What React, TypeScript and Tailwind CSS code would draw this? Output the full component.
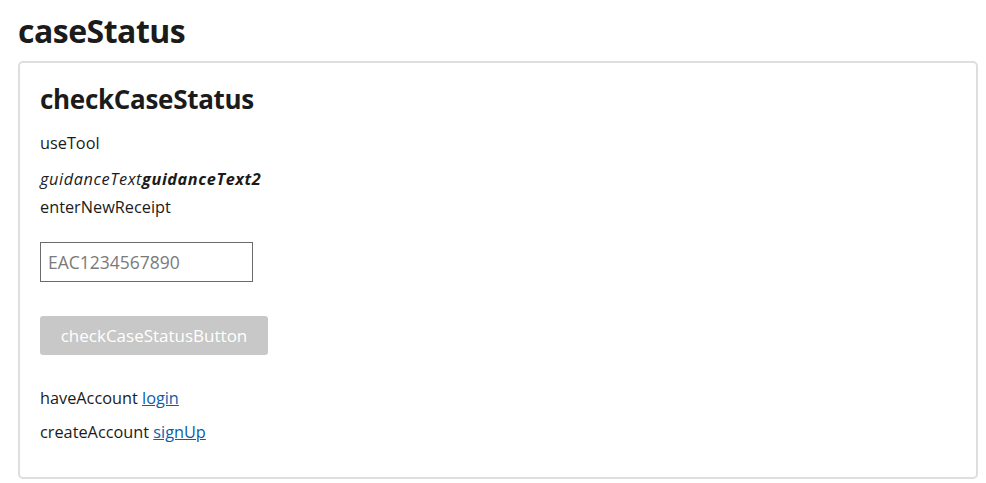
export default function App() {
  return (
    <div className="min-h-screen bg-white px-[18px] pt-[8px] text-[#1b1b1b] font-['Open_Sans',sans-serif]">
      <h1 className="text-[32px] font-bold leading-[46px] tracking-[-0.5px]">caseStatus</h1>
      <div className="mt-[7px] w-[960px] rounded-[5px] border-2 border-[#dedede] px-[20px] pt-[18px] pb-[34px]">
        <h2 className="text-[26px] font-bold leading-[36px] tracking-[-0.3px]">checkCaseStatus</h2>
        <p className="mt-[15px] text-[16.3px] leading-[22px]">useTool</p>
        <p className="mt-[14px] text-[16.3px] leading-[22px] tracking-[0.6px]">
          <em>guidanceText</em>
          <strong>
            <em>guidanceText2</em>
          </strong>
        </p>
        <p className="mt-[6px] text-[16.3px] leading-[22px]">enterNewReceipt</p>
        <input
          type="text"
          placeholder="EAC1234567890"
          className="mt-[24px] block h-[40px] w-[213px] border border-[#6b6b6b] px-[7px] text-[17.5px] placeholder:text-[#7a7a7a] outline-none"
        />
        <button
          disabled
          className="mt-[34px] block h-[39px] w-[228px] rounded-[3px] bg-[#c8c8c8] text-[17px] text-white"
        >
          checkCaseStatusButton
        </button>
        <p className="mt-[32px] text-[16.3px] leading-[22px]">
          haveAccount{" "}
          <a href="#" className="text-[#0b5ea8] underline">
            login
          </a>
        </p>
        <p className="mt-[12px] text-[16.3px] leading-[22px]">
          createAccount{" "}
          <a href="#" className="text-[#0b5ea8] underline">
            signUp
          </a>
        </p>
      </div>
    </div>
  );
}
